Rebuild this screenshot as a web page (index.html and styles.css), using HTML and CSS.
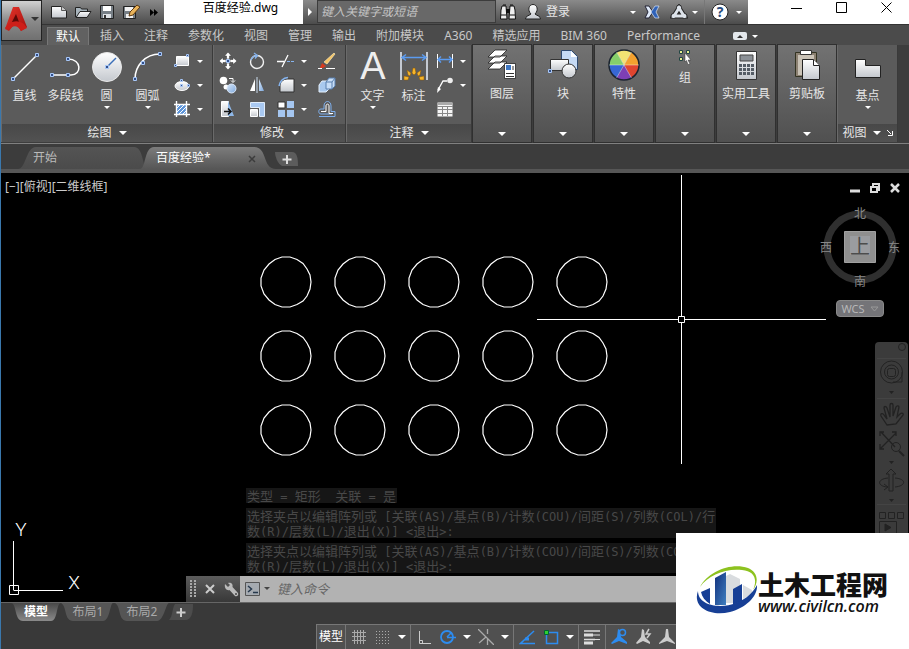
FILE: index.html
```
<!DOCTYPE html>
<html lang="zh-CN">
<head>
<meta charset="utf-8">
<title>百度经验.dwg</title>
<link rel="stylesheet" href="styles.css">
</head>
<body>
<svg width="0" height="0" class="defs" aria-hidden="true">
  <defs>
    <linearGradient id="silver" x1="0" y1="0" x2="0" y2="1"><stop offset="0" stop-color="#fff"/><stop offset="1" stop-color="#c4c8ce"/></linearGradient>
    <linearGradient id="sky" x1="0" y1="0" x2="1" y2="1"><stop offset="0" stop-color="#d8e8fa"/><stop offset="1" stop-color="#7ea8dc"/></linearGradient>
    <linearGradient id="red" x1="0" y1="0" x2="1" y2="1"><stop offset="0" stop-color="#e8352b"/><stop offset="1" stop-color="#a3100d"/></linearGradient>
    <linearGradient id="tabOn" x1="0" y1="0" x2="0" y2="1"><stop offset="0" stop-color="#7c7c7c"/><stop offset="1" stop-color="#565656"/></linearGradient>
    <linearGradient id="tabOff" x1="0" y1="0" x2="0" y2="1"><stop offset="0" stop-color="#545454"/><stop offset="1" stop-color="#4b4b4b"/></linearGradient>
    <linearGradient id="modelOn" x1="0" y1="0" x2="0" y2="1"><stop offset="0" stop-color="#484848"/><stop offset="1" stop-color="#8a8a8a"/></linearGradient>
    <linearGradient id="navy" x1="0" y1="0" x2="1" y2="1"><stop offset="0" stop-color="#12307c"/><stop offset="1" stop-color="#3f7fc0"/></linearGradient>
  </defs>
</svg>
<div class="app">
  <header class="titlebar">
    <button class="app-menu" aria-label="应用程序菜单">
      <svg width="24" height="26" viewBox="0 0 24 26"><path d="M9 1h6l8 20-6 4-3-5c-2-1-3-1-5 0l-4 5-4-2z" fill="url(#red)"/><path d="M12 8l3 8H8z" fill="#5c0907"/><path d="M1 22c5-7 12-9 19-4l3 4-6 3c-3-6-8-6-12-2z" fill="#cf1f19"/></svg>
      <i class="caret dark"></i>
    </button>
    <nav class="quick">
      <button aria-label="新建"><svg width="18" height="16" viewBox="0 0 18 16"><path d="M1.500 2.500h10l5 4v7.500h-15z" fill="url(#silver)" stroke="#222"/><path d="M11.500 2.500v4h5" fill="#ccc" stroke="#555"/></svg></button>
      <button aria-label="打开"><svg width="18" height="16" viewBox="0 0 18 16"><path d="M1.500 13V3.500h5l1 1.500h6v3" fill="#a8b4bc" stroke="#222"/><path d="M2 13.500l4-6h11l-4 6z" fill="url(#silver)" stroke="#222"/></svg></button>
      <button aria-label="保存"><svg width="16" height="16" viewBox="0 0 16 16"><path d="M1.500 1.500h13v13h-13z" fill="#777f86" stroke="#222"/><path d="M4 2h8v5H4z" fill="#fff"/><path d="M4 10h8v4H4z" fill="#dfe3e7"/><path d="M5 11h2v3H5z" fill="#333"/></svg></button>
      <button aria-label="另存为"><svg width="18" height="16" viewBox="0 0 18 16"><path d="M1.500 2.500h12v12h-12z" fill="#777f86" stroke="#222"/><path d="M3 3h8v4H3zM4 10h7v4H4z" fill="#f2f2f2"/><path d="M7 12l1-4 7-7 3 2-7 8z" fill="#e9b35a" stroke="#5a3812"/></svg></button>
      <button class="slim" aria-label="更多"><svg width="8" height="7" viewBox="0 0 8 7"><path d="M0 0l4 3.500L0 7zM4 0l4 3.500L4 7z" fill="#000"/></svg></button>
    </nav>
    <h1 class="doc-title">百度经验.dwg</h1>
    <button class="expand" aria-label="展开搜索"><i class="play"></i></button>
    <input class="search" type="text" placeholder="键入关键字或短语" aria-label="键入关键字或短语">
    <div class="account">
      <button aria-label="搜索"><svg width="18" height="18" viewBox="0 0 18 18"><path d="M3 3h4l1 13H1.500L2 7zM11 3h4l1 4 .5 9H10z" fill="#eee" stroke="#111"/><path d="M7 6h4v4H7z" fill="#111"/><path d="M4 2h3M11 2h3M2 12h5M11 12h5" stroke="#111"/></svg></button>
      <button class="login"><svg width="18" height="18" viewBox="0 0 18 18"><path d="M1.500 16c0-3 3-3 5.500-5C3 7 5 1.500 9 1.500S15 7 11 11c2.500 2 5.500 2 5.500 5z" fill="url(#silver)" stroke="#222"/></svg><span>登录</span><i class="caret"></i></button>
      <button aria-label="Exchange"><svg width="16" height="14" viewBox="0 0 16 14"><path d="M1 1h4l4 6-4 6H1l3-6z" fill="#dfe9f8" stroke="#223"/><path d="M15 1h-4L7 7l4 6h4l-3-6z" fill="#2f62b8" stroke="#dce6f5" stroke-width=".7"/></svg></button>
      <button class="a360"><svg width="18" height="16" viewBox="0 0 18 16" aria-label="Autodesk 360"><path d="M9 4l5 8H4z" fill="none" stroke="#222" stroke-width="5"/><g fill="#dfe6ef" stroke="#222"><circle cx="9" cy="3.500" r="2.500"/><circle cx="3.500" cy="12" r="2.500"/><circle cx="14.500" cy="12" r="2.500"/></g><path d="M9 4l5 8H4z" fill="none" stroke="#dde3ea" stroke-width="3"/></svg><i class="caret"></i></button>
      <button class="help"><svg width="18" height="18" viewBox="0 0 18 18" aria-label="帮助"><circle cx="9" cy="9" r="8" fill="#fff" stroke="#222"/><text x="9" y="14" text-anchor="middle" class="q">?</text></svg><i class="caret"></i></button>
    </div>
    <div class="window-controls">
      <button aria-label="最小化"><svg width="11" height="11"><path d="M0 6.500h11" stroke="#000"/></svg></button>
      <button aria-label="最大化"><svg width="11" height="11"><path d="M.5.5h10v10H.5z" fill="none" stroke="#000"/></svg></button>
      <button aria-label="关闭"><svg width="11" height="11"><path d="M.5.5l10 10M10.500.5l-10 10" stroke="#000"/></svg></button>
    </div>
  </header>

  <nav class="ribbon-tabs">
    <button class="on">默认</button><button>插入</button><button>注释</button><button>参数化</button><button>视图</button><button>管理</button><button>输出</button><button>附加模块</button><button>A360</button><button>精选应用</button><button>BIM 360</button><button>Performance</button>
    <button class="toggle" aria-label="最小化功能区"><svg width="14" height="8"><rect width="14" height="8" rx="2" fill="#e4e8ec"/><path d="M4 6l3-3 3 3z" fill="#333"/></svg><i class="caret"></i></button>
  </nav>

  <section class="ribbon">
    <div class="panel draw">
      <div class="tools">
        <button class="big"><svg width="32" height="32" viewBox="0 0 32 32"><path d="M4 28L28 4" stroke="#fff" stroke-width="1.500"/><g class="grip"><path d="M2.500 26.500h3v3h-3zM26.500 2.500h3v3h-3z"/></g></svg><span>直线</span></button>
        <button class="big"><svg width="32" height="32" viewBox="0 0 32 32"><path d="M2 24h19c11 0 11-16-3-16" fill="none" stroke="#fff" stroke-width="1.500"/><g class="grip"><path d="M.5 22.500h3v3h-3zM16.500 22.500h3v3h-3zM16.500 6.500h3v3h-3z"/></g></svg><span>多段线</span></button>
        <button class="big"><svg width="32" height="32" viewBox="0 0 32 32"><circle cx="16" cy="16" r="14.500" fill="url(#silver)" stroke="#e8e8e8"/><path d="M16 16l9-9" stroke="#3b6fb8" stroke-width="1.500"/><g class="grip"><path d="M14.500 14.500h3v3h-3z"/></g></svg><span>圆</span><i class="caret"></i></button>
        <button class="big"><svg width="32" height="32" viewBox="0 0 32 32"><path d="M3 28C3 15 13 3 28 3" fill="none" stroke="#fff" stroke-width="1.500"/><g class="grip"><path d="M1.500 26.500h3v3h-3zM26.500 1.500h3v3h-3zM9.500 10.500h3v3h-3z"/></g></svg><span>圆弧</span><i class="caret"></i></button>
        <div class="minis">
          <button aria-label="矩形"><svg width="18" height="18" viewBox="0 0 18 18"><path d="M3.500 4.500h12v9h-12z" fill="url(#silver)" stroke="#fff"/><g class="grip"><path d="M1.500 12.500h2v2h-2zM13.500 2.500h2v2h-2z"/></g></svg><i class="caret"></i></button>
          <button aria-label="椭圆"><svg width="18" height="18" viewBox="0 0 18 18"><ellipse cx="9" cy="10" rx="7" ry="4.500" fill="url(#silver)" stroke="#fff"/><g class="grip"><path d="M7.500 8.500h2v2h-2zM7.500 3.500h2v2h-2zM14.500 8.500h2v2h-2z"/></g></svg><i class="caret"></i></button>
          <button aria-label="图案填充"><svg width="18" height="18" viewBox="0 0 18 18"><path d="M4 5h9v9H4z" fill="#5d94d8"/><path d="M4 8l3-3M4 12l7-7M6 14l7-7M10 14l3-3" stroke="#fff"/><path d="M1 4.500h16M1 14.500h16M3.500 1v16M13.500 1v16" stroke="#fff" stroke-width="1.400"/></svg><i class="caret"></i></button>
        </div>
      </div>
      <button class="caption">绘图 <i class="caret wide"></i></button>
    </div>

    <div class="panel modify">
      <div class="tools grid4">
        <button aria-label="移动"><svg width="18" height="18" viewBox="0 0 18 18"><path d="M9 0l3.500 4h-2v3h-3V4h-2zM9 18l3.500-4h-2v-3h-3v3h-2zM0 9l4-3.500v2h3v3H4v2zM18 9l-4-3.500v2h-3v3h3v2z" fill="#fff" stroke="#333" stroke-width=".5"/><g class="grip"><path d="M7.500 7.500h3v3h-3z"/></g></svg></button>
        <button aria-label="旋转"><svg width="18" height="18" viewBox="0 0 18 18"><circle cx="9" cy="10" r="6.500" fill="none" stroke="#f2f2f2" stroke-width="1.400"/><path d="M3 8c1-3 3-4.500 6-4.500M6 1l3.500 2.500L7 6.500" fill="none" stroke="#86b4ee" stroke-width="1.300"/></svg></button>
        <button aria-label="修剪"><svg width="18" height="18" viewBox="0 0 18 18"><path d="M0 9.500h7M5 15l6-12" stroke="#fff" stroke-width="1.300"/><path d="M10 9.500h8" stroke="#86b4ee" stroke-dasharray="3 1"/></svg><i class="caret"></i></button>
        <button aria-label="删除"><svg width="18" height="18" viewBox="0 0 18 18"><path d="M16 1l1 1-8 10-3-2z" fill="#f6c465" stroke="#fff1c0" stroke-width=".6"/><path d="M4 11l4 3-3 2H2z" fill="#d83a1e"/><path d="M0 16.500h4M8 16.500h9" stroke="#fff"/></svg></button>
        <button aria-label="复制"><svg width="18" height="18" viewBox="0 0 18 18"><circle cx="4.500" cy="4.500" r="3.800" fill="#fff"/><circle cx="7" cy="11" r="2.500" fill="#fff"/><circle cx="12.500" cy="12.500" r="4.500" fill="url(#sky)" stroke="#dce9fa"/><path d="M10 2.500h4v3m-2-1l2 2 2-2" fill="none" stroke="#fff"/></svg></button>
        <button aria-label="镜像"><svg width="18" height="18" viewBox="0 0 18 18"><path d="M7 3v12H2z" fill="#fff"/><path d="M11 3v12h5z" fill="url(#sky)"/><path d="M9 1v16" stroke="#cde"/></svg></button>
        <button aria-label="圆角"><svg width="18" height="18" viewBox="0 0 18 18"><path d="M3 16V9a7 7 0 0 1 7-6h7v13z" fill="url(#silver)" stroke="#333"/><path d="M2 10C3 5 6 2 11 1.500" fill="none" stroke="#86b4ee" stroke-width="1.500"/></svg><i class="caret"></i></button>
        <button aria-label="分解"><svg width="18" height="18" viewBox="0 0 18 18"><path d="M1 9l3-4h7v8l-3 3H1z" fill="#a9c9ee" stroke="#e5f0fc"/><path d="M8 6l3-4h6v8l-3 3H8z" fill="#c8def7" stroke="#587fae"/><path d="M8 6h6l3-4m-3 4v7" fill="none" stroke="#587fae"/></svg></button>
        <button aria-label="拉伸"><svg width="18" height="18" viewBox="0 0 18 18"><path d="M2.500 1.500h7v15h-7z" fill="url(#silver)" stroke="#fff"/><path d="M9 1l6 15H9z" fill="#8fb8e8"/><path d="M5 11.500h7m-3-3l3 3-3 3" fill="none" stroke="#111" stroke-width="1.500"/></svg></button>
        <button aria-label="缩放"><svg width="18" height="18" viewBox="0 0 18 18"><path d="M2.500 2.500h14v14h-5v-9h-9z" fill="#a9c9f2" stroke="#e1edfb"/><path d="M2.500 9.500h7v7h-7z" fill="url(#silver)" stroke="#fff"/></svg></button>
        <button aria-label="阵列"><svg width="18" height="18" viewBox="0 0 18 18"><path d="M1 2h7v6H1z" fill="#fff" stroke="#333"/><path d="M10 1h7v7h-7zM1 10h7v7H1zM10 10h7v7h-7z" fill="#a5c6f0"/></svg><i class="caret"></i></button>
        <button aria-label="偏移"><svg width="18" height="18" viewBox="0 0 18 18"><path d="M1 16.500h16v-5h-4V6c0-6-7-6-7 0v3H3c-3 0-3 5 0 5h11" fill="none" stroke="#7fb0ee"/><path d="M3 11.500h5V6c0-2.500 3-2.500 3 0v7.500h4" fill="none" stroke="#fff"/></svg></button>
      </div>
      <button class="caption">修改 <i class="caret wide"></i></button>
    </div>

    <div class="panel annotate">
      <div class="tools">
        <button class="big"><svg class="glyph" width="32" height="32" viewBox="0 0 32 32"><text x="16" y="28" text-anchor="middle" class="letter">A</text></svg><span>文字</span><i class="caret"></i></button>
        <button class="big"><svg width="32" height="32" viewBox="0 0 32 32"><path d="M3 1v28M29 1v28" stroke="#e6eefa" stroke-width="1.500"/><path d="M4 6.500h24M8 3.500l-4 3 4 3M24 3.500l4 3-4 3" fill="none" stroke="#5b9bf0" stroke-width="1.500"/><g fill="#f5b52a" stroke="#8a5405" stroke-width=".5"><path d="M15 17h2l1 5-2 2-2-2zM9 19l4 3-1 3-2-1zM23 19l-4 3 1 3 2-1zM6 25l5 1-1 3H6zM26 25l-5 1 1 3h4z"/></g></svg><span>标注</span></button>
        <div class="minis">
          <button aria-label="线性"><svg width="18" height="18" viewBox="0 0 18 18"><path d="M1.500 2v14M16.500 2v14" stroke="#fff"/><path d="M2 7.500h14M5 4.500l-3 3 3 3M13 4.500l3 3-3 3" fill="none" stroke="#5b9bf0" stroke-width="1.500"/></svg><i class="caret"></i></button>
          <button aria-label="引线"><svg width="18" height="18" viewBox="0 0 18 18"><circle cx="14" cy="4.500" r="2.800" fill="#eee"/><path d="M11 5H7l-5 9" fill="none" stroke="#fff" stroke-width="1.300"/><path d="M1 17l1-6 3 2z" fill="#fff"/></svg><i class="caret"></i></button>
          <button aria-label="表格"><svg width="18" height="18" viewBox="0 0 18 18"><path d="M1.500 2.500h15v14h-15z" fill="#f5f5f5"/><path d="M2 3h14v2H2z" fill="#aaa"/><path d="M1 6.500h16M1 9.500h16M1 13.500h16M6.500 6v10M11.500 6v10" stroke="#888"/></svg></button>
        </div>
      </div>
      <button class="caption">注释 <i class="caret wide"></i></button>
    </div>

    <div class="slots">
      <button class="slot"><svg width="32" height="32" viewBox="0 0 32 32"><g fill="#fff" stroke="#222" stroke-width=".8"><path d="M9 13h12l-7 7H2zM9 7h12l-7 7H2zM9 1h12l-7 7H2z"/><path d="M18.500 14.500h11v15h-11z"/></g><path d="M20 16h5v5h-5z" fill="#3f78c4"/><path d="M20 24.500h8M20 27.500h8M27 17v4" stroke="#333"/></svg><span>图层</span><i class="caret wide"></i></button>
      <button class="slot"><svg width="32" height="32" viewBox="0 0 32 32"><path d="M14.500 1.500h10l6 6v13h-16z" fill="#c5daf5" stroke="#2f4a70"/><path d="M24 2v6h6" fill="#fff"/><path d="M3.500 10.500h18v11h-18z" fill="url(#silver)" stroke="#333"/><circle cx="22" cy="22" r="7" fill="url(#silver)" stroke="#333"/><g class="grip"><path d="M1.500 20.500h3v3h-3z"/></g></svg><span>块</span><i class="caret wide"></i></button>
      <button class="slot"><svg width="32" height="32" viewBox="0 0 32 32"><path d="M16 16L8.500 3a15 15 0 0 1 15 0z" fill="#f2e373"/><path d="M16 16L23.500 3A15 15 0 0 1 31 16z" fill="#f3a12f"/><path d="M16 16h15a15 15 0 0 1-7.500 13z" fill="#e0452f"/><path d="M16 16l7.500 13a15 15 0 0 1-15 0z" fill="#7d3fb5"/><path d="M16 16L8.500 29A15 15 0 0 1 1 16z" fill="#3767d4"/><path d="M16 16H1A15 15 0 0 1 8.500 3z" fill="#86cf6a"/><circle cx="16" cy="16" r="15" fill="none" stroke="#1b2430" stroke-width="1.500"/><path d="M1 16h30M8.500 3l15 26M23.500 3l-15 26" stroke="#fff" stroke-width=".4"/></svg><span>特性</span><i class="caret wide"></i></button>
      <button class="slot small"><svg width="16" height="16" viewBox="0 0 16 16"><g fill="#e8ef8e" stroke="#244"><path d="M2.500 1.500h3v3h-3zM9.500 1.500h3v3h-3zM2.500 8.500h3v3h-3z"/></g><path d="M8 4l6 7h-3l2 4-2 .5-1.500-4L8 13z" fill="#fff" stroke="#333" stroke-width=".5"/></svg><span>组</span><i class="caret wide"></i></button>
      <button class="slot"><svg width="32" height="32" viewBox="0 0 32 32"><path d="M6.500 2.500h20v28h-20z" fill="url(#silver)" stroke="#333"/><path d="M10 6h13v6H10z" fill="#8b9096" stroke="#444"/><path d="M9 15h3v3H9zM13 15h3v3h-3zM17 15h3v3h-3zM21 15h3v3h-3zM9 19h3v3H9zM13 19h3v3h-3zM17 19h3v3h-3zM21 19h3v3h-3zM9 23h3v3H9zM13 23h3v3h-3zM17 23h3v3h-3zM21 23h3v3h-3z" fill="#555d66"/></svg><span>实用工具</span><i class="caret wide"></i></button>
      <button class="slot"><svg width="32" height="32" viewBox="0 0 32 32"><path d="M4.500 3.500h21v24h-21z" fill="#8c8172" stroke="#332"/><path d="M7 6h16v20H7z" fill="#c9c2b6"/><path d="M9.500 1.500h11v4h-11z" fill="#fff" stroke="#333"/><path d="M11.500 10.500h11l6 6v14h-17z" fill="url(#silver)" stroke="#222"/><path d="M22.500 10.500v6h6" fill="#fff" stroke="#222"/></svg><span>剪贴板</span><i class="caret wide"></i></button>
    </div>

    <div class="panel view">
      <div class="tools">
        <button class="big"><svg width="32" height="32" viewBox="0 0 32 32"><path d="M3.500 8.500h10v6h15v12h-25z" fill="url(#silver)" stroke="#222"/></svg><span>基点</span><i class="caret"></i></button>
      </div>
      <button class="caption">视图 <i class="caret wide"></i><svg width="6" height="6" viewBox="0 0 6 6"><path d="M0 0l4 4M5.500 1v4.500H1" fill="none" stroke="#fff"/></svg></button>
    </div>
  </section>

  <nav class="doc-tabs">
    <button class="doc-tab"><svg class="shape" viewBox="0 0 130 22" preserveAspectRatio="none"><path d="M0 22C8 22 8 0 18 0H116C126 0 124 22 130 22z" fill="url(#tabOff)"/></svg><span>开始</span></button>
    <button class="doc-tab on"><svg class="shape" viewBox="0 0 136 22" preserveAspectRatio="none"><path d="M0 22C6 22 4 0 14 0H114C128 0 122 22 136 22z" fill="url(#tabOn)"/></svg><span>百度经验*</span><svg class="close" width="8" height="8"><path d="M1 1l6 6M7 1L1 7" stroke="#3c3c3c" stroke-width="1.500"/></svg></button>
    <button class="add" aria-label="新图形"><svg width="23" height="14" viewBox="0 0 23 14"><path d="M0 0h17c5 0 6 6 6 14H7C3 12 0 5 0 0z" fill="#5c5c5c"/><path d="M12 3v9M7.500 7.500h9" stroke="#ddd" stroke-width="2"/></svg></button>
  </nav>

  <main class="canvas">
    <svg class="drawing" width="908" height="430" viewBox="1 173 908 430" aria-label="图形">
      <defs><path id="hole" d="M25 0L24 7 21 14 17 19 11 22.500 4 25-4 25-11 22.500-17 18-22 12-25 4-25-4-22-12-17-18-11-22.500-4-25 4-25 11-22.500 17-18.500 21-13 24-7z"/></defs>
      <g fill="none" stroke="#fff" stroke-width="1.200">
        <use href="#hole" x="286" y="282"/><use href="#hole" x="360" y="282"/><use href="#hole" x="434" y="282"/><use href="#hole" x="508" y="282"/><use href="#hole" x="582" y="282"/>
        <use href="#hole" x="286" y="356"/><use href="#hole" x="360" y="356"/><use href="#hole" x="434" y="356"/><use href="#hole" x="508" y="356"/><use href="#hole" x="582" y="356"/>
        <use href="#hole" x="286" y="430"/><use href="#hole" x="360" y="430"/><use href="#hole" x="434" y="430"/><use href="#hole" x="508" y="430"/><use href="#hole" x="582" y="430"/>
      </g>
      <path d="M681.500 175v141M681.500 323v141M537 319.500h141M685 319.500h141M678.500 316.500h6v6h-6z" fill="none" stroke="#fff"/>
      <path d="M13.500 541v49M13.500 590.500H63M9.500 585.500h9v9h-9z" fill="none" stroke="#fff"/>
      <text x="21" y="536" class="axis">Y</text><text x="74" y="589" class="axis">X</text>
    </svg>
    <p class="view-label">[−][俯视][二维线框]</p>
    <div class="view-controls">
      <button aria-label="最小化视口"><svg width="10" height="10"><path d="M0 8h10" stroke="#ddd" stroke-width="3"/></svg></button>
      <button aria-label="还原视口"><svg width="10" height="10"><path d="M1 4h6v5H1zM3 3V1h6v6H8" fill="none" stroke="#ddd" stroke-width="2"/></svg></button>
      <button aria-label="关闭视口"><svg width="10" height="10"><path d="M1 1l8 8M9 1L1 9" stroke="#ddd" stroke-width="2.500"/></svg></button>
    </div>
    <div class="viewcube">
      <svg width="84" height="84" viewBox="0 0 84 84"><circle cx="42" cy="42" r="33" fill="none" stroke="#2f2f2f" stroke-width="7"/><path d="M26.500 26.500h31v31h-31z" fill="#8f8f8f" stroke="#a0a0a0"/><path d="M32 31h20v19H32z" fill="#9a9ca0"/>
      <g class="compass"><text x="42" y="13">北</text><text x="8" y="47">西</text><text x="76" y="47">东</text><text x="42" y="81">南</text></g><text x="42" y="49" class="face">上</text></svg>
      <button class="wcs">WCS <svg width="9" height="6"><path d="M1 1h7L4.500 5z" fill="none" stroke="#999"/></svg></button>
    </div>
    <aside class="navbar">
      <svg width="33" height="192" viewBox="0 0 33 192" fill="none" stroke="#222" aria-label="导航栏">
        <circle cx="27" cy="5" r="3.500"/><path d="M2 16.500h29M2 56.500h29M2 162.500h29" stroke="#444"/>
        <circle cx="16.500" cy="30" r="11"/><circle cx="16.500" cy="30" r="7"/><rect x="12.500" y="26.500" width="8" height="8" rx="2"/><path d="M27 30v10h-9"/>
        <path d="M14 49h5l-2.500 3zM14 119h5l-2.500 3zM14 157h5l-2.500 3z" fill="#222" stroke="none"/>
        <path d="M12 83l-6-9c-1-3 2-3 3-1l3 4-3-11c0-2 2-2 3 0l3 9V63c0-2 3-2 3 0v11l3-9c1-2 3-1 3 0l-2 10 3-3c2-2 4 0 3 1l-7 9z" stroke-width="1.300"/>
        <path d="M6 90l14 15M21 91L5 107M5 94v-4h4M17 90h4v4M5 102v5h4" stroke-width="1.300"/><circle cx="21" cy="105" r="4.500"/><path d="M24 109l5 5" stroke-width="2"/>
        <path d="M14 149v-17h-3l5-5 5 5h-3v17z"/><path d="M13 136c-11 1-11 8-1 9M20 136c12 1 11 8 0 9M9 142l4 3-4 3"/>
        <path d="M4.500 170.500h6v6h-6zM13.500 170.500h6v6h-6zM22.500 170.500h6v6h-6zM4.500 179.500h17v12h-17z"/><path d="M10 182l6 3.500-6 3.500z" fill="#222"/>
      </svg>
    </aside>

    <section class="command">
      <div class="history">
        <p>类型<b> = </b>矩形<b>  </b>关联<b> = </b>是</p>
        <p>选择夹点以编辑阵列或<b> [</b>关联<b>(AS)/</b>基点<b>(B)/</b>计数<b>(COU)/</b>间距<b>(S)/</b>列数<b>(COL)/</b>行<br>数<b>(R)/</b>层数<b>(L)/</b>退出<b>(X)] &lt;</b>退出<b>&gt;:</b></p>
        <p>选择夹点以编辑阵列或<b> [</b>关联<b>(AS)/</b>基点<b>(B)/</b>计数<b>(COU)/</b>间距<b>(S)/</b>列数<b>(COL)/</b>行<br>数<b>(R)/</b>层数<b>(L)/</b>退出<b>(X)] &lt;</b>退出<b>&gt;:</b></p>
      </div>
      <div class="command-line">
        <div class="command-tools">
          <svg width="6" height="18"><path d="M1 0v18M5 0v18" stroke="#aaa" stroke-width="2" stroke-dasharray="2 1"/></svg>
          <button aria-label="关闭"><svg width="10" height="10"><path d="M1 1l8 8M9 1L1 9" stroke="#ccc" stroke-width="2"/></svg></button>
          <button aria-label="自定义"><svg width="15" height="15" viewBox="0 0 15 15"><path d="M1 2l3 3 2-2-2-2c4-1 5 2 4.500 4L14 11c1 2-1 4-3 3L5.500 8C3 9 0 6 1 2z" fill="#bbb"/><circle cx="12" cy="12" r="1" fill="#444"/></svg></button>
        </div>
        <svg class="prompt" width="25" height="14" viewBox="0 0 25 14"><path d="M.5.5h14v13H.5z" fill="#a5aab0" stroke="#555"/><path d="M3 4l3.500 3L3 10M8 10.500h5" fill="none" stroke="#26384c" stroke-width="1.500"/><path d="M19 5h6l-3 3z" fill="#444"/></svg>
        <input type="text" placeholder="键入命令" aria-label="键入命令">
      </div>
    </section>
  </main>

  <footer class="bottom">
    <nav class="layout-tabs">
      <button class="on"><svg class="shape" viewBox="0 0 50 18" preserveAspectRatio="none"><path d="M0 0h50c-5 0-3 18-10 18H12C3 18 6 0 0 0z" fill="url(#modelOn)"/></svg><span>模型</span></button>
      <button><svg class="shape" viewBox="0 0 54 18" preserveAspectRatio="none"><path d="M4 0h48c-3 0-3 18-10 18H12C3 18 6 3 0 0z" fill="#555"/></svg><span>布局1</span></button>
      <button><svg class="shape" viewBox="0 0 54 18" preserveAspectRatio="none"><path d="M4 0h50c-3 0-5 18-12 18H12C3 18 6 3 0 0z" fill="#555"/></svg><span>布局2</span></button>
      <button class="add" aria-label="新建布局"><svg width="24" height="17" viewBox="0 0 24 17"><path d="M6 0h18c0 8-1 16-8 16H0C4 12 3 4 6 0z" fill="#4c4c4c"/><path d="M12 4v9M7.500 8.500h9" stroke="#ccc" stroke-width="2"/></svg></button>
    </nav>
    <div class="status">
      <div class="cell"><button class="model">模型</button></div>
      <div class="cell"><button aria-label="栅格"><svg width="16" height="16"><path d="M3.500 1v14M6.500 1v14M9.500 1v14M12.500 1v14M1 3.500h14M1 7.500h14M1 11.500h14" stroke="#aaa"/></svg></button><button aria-label="捕捉"><svg width="16" height="16"><path d="M1 2.500h14M1 5.500h14M1 8.500h14M1 11.500h14M1 14.500h14" stroke="#aaa" stroke-dasharray="1 2"/></svg></button><button class="drop" aria-label="捕捉选项"><i class="caret wide"></i></button></div>
      <div class="cell"><button aria-label="正交"><svg width="16" height="16"><path d="M3.500 2v12.500H15M3.500 11.500h3v3" fill="none" stroke="#ccc"/></svg></button><button aria-label="极轴"><svg width="18" height="16"><circle cx="8" cy="8" r="6" fill="none" stroke="#2d8cf0" stroke-width="1.800"/><path d="M8 8.500h9M8 8l4-4" stroke="#2d8cf0" stroke-width="1.500"/></svg></button><button class="drop" aria-label="极轴选项"><i class="caret wide"></i></button><button aria-label="等轴测"><svg width="16" height="16"><path d="M0 0l16 16M9.500 0v5M9.500 10v6M8 8l-7 6" stroke="#aaa" stroke-width="1.300"/></svg></button><button class="drop" aria-label="等轴测选项"><i class="caret wide"></i></button></div>
      <div class="cell"><button aria-label="对象捕捉追踪"><svg width="16" height="16"><path d="M15 2L1.500 14.500H16" fill="none" stroke="#2d8cf0" stroke-width="1.500"/><path d="M6 8.500h4v3H6z" fill="#2d8cf0"/></svg></button><button aria-label="对象捕捉"><svg width="16" height="16"><path d="M3.500 3.500h11v11h-11z" fill="none" stroke="#2d8cf0" stroke-width="1.500"/><path d="M1.500 1.500h4v4h-4z" fill="#2fd02f" stroke="#063"/></svg></button><button class="drop" aria-label="对象捕捉选项"><i class="caret wide"></i></button></div>
      <div class="cell"><button aria-label="线宽"><svg width="16" height="16"><path d="M0 2h16M0 10.500h11" stroke="#ddd" stroke-width="1.500"/><path d="M0 6h9M0 14h9" stroke="#ddd" stroke-width="3"/><path d="M9 6h7M11 10.500h5" stroke="#ddd"/></svg></button></div>
      <div class="cell"><button aria-label="注释可见性"><svg width="18" height="18" viewBox="0 0 18 18"><path d="M8 1l2 1 1 7 6 5v2l-8-3-7 3-1-1 6-6z" fill="#2d8cf0"/><circle cx="12.500" cy="4.500" r="3" fill="#505050" stroke="#2d8cf0" stroke-width="1.500"/></svg></button><button aria-label="自动缩放"><svg width="18" height="18" viewBox="0 0 18 18"><path d="M8 1l2 1 1 7 5 5v2l-7-3-6 3-1-1 5-6z" fill="#ccc"/><path d="M15 1l-3 5h4l-3 4" fill="none" stroke="#ccc" stroke-width="1.500"/></svg></button><button aria-label="注释比例"><svg width="18" height="18" viewBox="0 0 18 18"><path d="M8 1h2l1 8 6 6v1l-8-3-8 3v-1l6-6z" fill="#ccc"/></svg></button></div>
    </div>
  </footer>

  <div class="watermark">
    <svg width="64" height="52" viewBox="0 0 64 52"><path d="M4 22C12 6 36-3 52 3c10 4 11 14 5 22C62 14 58 6 46 5 30 3 12 10 4 22z" fill="#8dc21f"/><path d="M30 11l4-2 10 5v24H30z" fill="#d9dcdf"/><path d="M47 20l9 5v4l-9 5z" fill="#d9dcdf"/><path d="M19 13l11-6v33H19z" fill="url(#navy)"/><path d="M5 27l9-4v16C9 36 6 32 5 27zM37 24l9-5v17l-9 4z" fill="#173f95"/><path d="M2 26c0 15 23 18 38 12 11-4 18-12 21-18 1 11-11 23-27 27C14 52-4 42 2 26z" fill="#173f95"/></svg>
    <div class="brand"><strong>土木工程网</strong><em>www.civilcn.com</em></div>
  </div>
</div>
</body>
</html>
```
FILE: styles.css
```
* { box-sizing: border-box; }
body {
  margin: 0;
  background: #3b3b3b;
  color: #e6e6e6;
  font: 12px/16px "Noto Sans", "Noto Sans CJK SC", sans-serif;
}
h1, p { margin: 0; font-size: 12px; font-weight: 400; }
button {
  margin: 0;
  padding: 0;
  border: 0;
  background: none;
  color: inherit;
  font: inherit;
  white-space: nowrap;
}
input { min-width: 0; border: 0; font: inherit; }
svg { display: block; flex: none; }
.defs { position: absolute; }
.grip { fill: #33508a; stroke: #a9c8f8; }

.caret {
  display: inline-block;
  width: 0;
  height: 0;
  flex: none;
  border: 3px solid transparent;
  border-top-color: #fff;
  border-bottom: 0;
}
.caret.wide { border-width: 4px 4px 0; }
.caret.dark { border-width: 4px 4px 0; border-top-color: #333; }
.play { border: 4px solid transparent; border-left-color: #fff; border-right: 0; }

.app {
  position: relative;
  display: flex;
  flex-direction: column;
  min-height: 100vh;
  border-left: 1px solid #3a78ad;
  overflow: hidden;
}

/* Title bar */
.titlebar {
  display: flex;
  height: 24px;
  padding-left: 46px;
  background: linear-gradient(#8a8a8a, #4c4c4c);
}
.titlebar button { display: flex; align-items: center; justify-content: center; }
.titlebar .app-menu {
  position: absolute;
  left: 0;
  top: 0;
  width: 41px;
  height: 41px;
  gap: 3px;
  padding-bottom: 4px;
  border: 1px solid #222;
  background: linear-gradient(#d2d2d2, #8b8b8b 50%, #707070);
}
.quick { display: flex; }
.quick button { width: 24px; }
.quick .slim { width: 21px; }
.doc-title {
  flex: 1 1 139px;
  background: #fff;
  color: #000;
  padding-left: 14px;
  text-align: center;
}
.expand { width: 14px; }
.search {
  flex: 1 1 179px;
  height: 23px;
  padding: 0 3px;
  border: 1px solid #3c3c3c;
  background: #686868;
}
.search::placeholder { color: #c4c4c4; opacity: 1; font-style: italic; }
.account { display: flex; }
.account button { width: 24px; }
.account .login { width: 120px; gap: 4px; padding: 0 4px; }
.login .caret { margin-left: auto; }
.account .a360 { width: 41px; gap: 4px; border-right: 1px solid #777; }
.account .help { width: 43px; gap: 7px; }
.q { font: bold 14px "Noto Sans", sans-serif; fill: #274b7d; }
.window-controls {
  display: flex;
  flex: 0 0 161px;
  justify-content: flex-end;
  padding-bottom: 10px;
  background: #fff;
}
.window-controls button { width: 45px; }

/* Ribbon tabs */
.ribbon-tabs {
  display: flex;
  height: 21px;
  padding: 2px 0 0 46px;
  background: #4b4b4b;
  border-top: 1px solid #343434;
  color: #c8c8c8;
}
.ribbon-tabs button { padding: 0 10px; }
.ribbon-tabs button.on {
  padding: 0 8px;
  margin-right: 1px;
  border: 1px solid #777;
  border-bottom: 0;
  background: #616161;
  color: #fff;
}
.ribbon-tabs .toggle { display: flex; align-items: center; gap: 5px; margin-left: 13px; }

/* Ribbon */
.ribbon {
  display: flex;
  height: 99px;
  padding-bottom: 1px;
  border-bottom: 1px solid #808080;
  background: #3d3d3d;
}
.panel {
  display: flex;
  flex-direction: column;
  border-right: 1px solid #3a3a3a;
  border-left: 1px solid #6a6a6a;
  background: #5b5b5b;
}
.draw { flex: 0 0 212px; }
.modify { flex: 0 0 133px; }
.annotate { flex: 0 0 126px; }
.view { flex: 0 0 61px; }
.tools { display: flex; flex: 1; padding-top: 6px; justify-content: center; }
.draw .tools { justify-content: flex-start; padding-left: 2px; }
.caption {
  display: flex;
  align-items: center;
  justify-content: center;
  gap: 7px;
  height: 18px;
  background: linear-gradient(#484848, #525252);
}
.view .caption { gap: 6px; }
.big {
  display: flex;
  flex-direction: column;
  align-items: center;
  width: 41px;
  height: 64px;
}
.big span { margin: 5px 0 2px; }
.minis { display: grid; grid-template-rows: repeat(3, 24px); margin-top: -2px; }
.minis button, .grid4 button { display: flex; align-items: center; gap: 6px; }
.draw .minis { margin-left: 5px; }
.annotate .minis { margin-left: 2px; }
.tools.grid4 {
  display: grid;
  grid-template-columns: 29px 29px 41px 18px;
  grid-template-rows: repeat(3, 24px);
  padding: 4px 4px 0 0;
}
.glyph { overflow: visible; }
.letter { font: 38px "Liberation Sans", sans-serif; fill: #eee; }
.slots { display: grid; grid-template-columns: repeat(6, 58px); gap: 3px; padding: 0 1px; }
.slot {
  display: flex;
  flex-direction: column;
  align-items: center;
  padding: 4px 0;
  outline: 1px solid #303030;
  background: linear-gradient(#727272, #505050);
}
.slot span { margin-top: 5px; }
.slot .caret { margin: auto 0 2px; }

/* Drawing tabs */
.doc-tabs {
  display: flex;
  align-items: flex-start;
  height: 29px;
  padding: 3px 0 0 17px;
  border-bottom: 4px solid #565656;
  background: #3c3c3c;
}
.doc-tab {
  position: relative;
  width: 130px;
  height: 22px;
  padding-left: 15px;
  text-align: left;
  color: #bbb;
}
.doc-tab.on { width: 136px; margin-left: -8px; padding-left: 16px; color: #fff; }
.doc-tab span { position: relative; }
.shape { position: absolute; inset: 0; width: 100%; height: 100%; }
.close { position: absolute; right: 20px; top: 8px; }
.doc-tabs .add { margin: 5px 0 0 -1px; }

/* Drawing area */
.canvas { position: relative; flex: 1; min-height: 429px; background: #000; }
.drawing { position: absolute; left: 0; top: 0; }
.axis { font: 300 19px Roboto, sans-serif; fill: #fff; text-anchor: middle; }
.view-label { position: absolute; left: 4px; top: 6px; color: #ccc; }
.view-controls { position: absolute; right: 9px; top: 10px; display: flex; gap: 10px; }
.viewcube {
  position: absolute;
  right: 7px;
  top: 32px;
  display: flex;
  flex-direction: column;
  align-items: center;
  gap: 11px;
}
.compass { font-size: 12px; fill: #888; text-anchor: middle; }
.face { font-size: 20px; fill: #4c4c4c; text-anchor: middle; }
.wcs {
  display: flex;
  align-items: center;
  gap: 5px;
  height: 17px;
  padding: 0 4px;
  border: 1px solid #8a8a8a;
  border-radius: 4px;
  background: #747478;
  color: #b8b8b8;
  font-size: 11px;
}
.navbar {
  position: absolute;
  right: 1px;
  top: 169px;
  border-radius: 4px 4px 0 0;
  background: #3b3b3b;
}

/* Command window */
.command { position: absolute; left: 185px; right: 0; bottom: 0; }
.history {
  display: flex;
  flex-direction: column;
  align-items: flex-start;
  gap: 5px;
  margin: 0 0 3px 60px;
}
.history p {
  padding: 0 1px;
  background: #161616;
  color: #484848;
  font: 13px/15px "Noto Sans CJK SC", sans-serif;
  white-space: nowrap;
}
.history b { font: 12px/1px "DejaVu Sans Mono", monospace; white-space: pre; }
.command-line { display: flex; align-items: center; height: 26px; background: #b2b2b2; }
.command-tools {
  display: flex;
  align-items: center;
  gap: 9px;
  width: 54px;
  height: 26px;
  padding: 0 4px;
  background: linear-gradient(#5c5c5c, #383838);
}
.prompt { margin: 0 7px 0 5px; }
.command-line input { flex: 1; background: none; font-size: 13px; padding: 0; }
.command-line input::placeholder { color: #666; opacity: 1; font-style: italic; }

/* Layout tabs and status bar */
.bottom {
  display: flex;
  flex-direction: column;
  justify-content: space-between;
  height: 47px;
  border-top: 1px solid #666;
  background: #393939;
}
.layout-tabs { display: flex; padding-left: 10px; color: #aaa; }
.layout-tabs button { position: relative; width: 54px; height: 18px; }
.layout-tabs .on { width: 50px; color: #fff; font-weight: 700; }
.layout-tabs span { position: relative; }
.status { display: flex; margin-left: 315px; height: 25px; border-top: 1px solid #777; background: #505050; }
.cell { display: flex; align-items: center; padding: 0 1px; border: solid #777; border-width: 0 1px; }
.cell + .cell { border-left: 0; }
.cell button { display: flex; align-items: center; justify-content: center; width: 24px; }
.cell .drop { width: 14px; }
.cell .model { width: 26px; color: #fff; }

/* Site mark */
.watermark {
  position: absolute;
  right: 0;
  bottom: 0;
  display: flex;
  align-items: center;
  width: 233px;
  height: 116px;
  padding-left: 20px;
  background: #fff;
  color: #111;
}
.brand { display: flex; flex-direction: column; margin-left: -2px; padding-top: 3px; }
.brand strong { font: 900 26px/26px "Noto Sans CJK SC", sans-serif; }
.brand em { font: italic 600 16px/18px "Open Sans", sans-serif; }
```
